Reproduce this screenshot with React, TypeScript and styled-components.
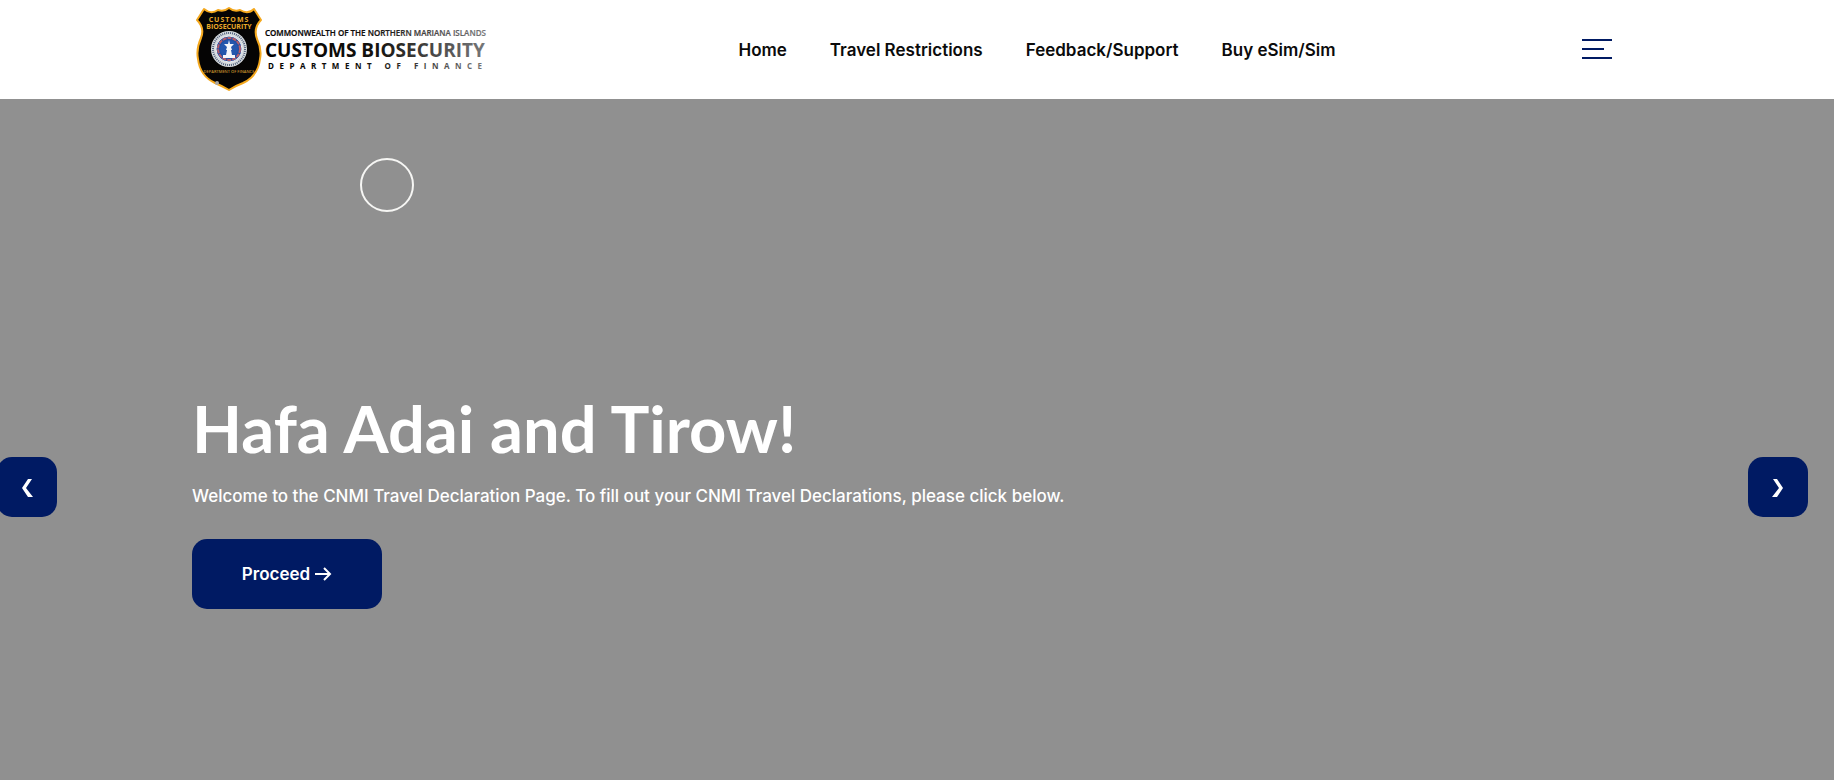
import React from 'react';
import styled, { createGlobalStyle } from 'styled-components';

const navy = '#001a63';

const GlobalStyle = createGlobalStyle`
  * { box-sizing: border-box; }
  body {
    margin: 0;
    background: #909090;
    font-family: Inter, "Liberation Sans", sans-serif;
    overflow-x: hidden;
  }
`;

const Page = styled.div`
  display: flex;
  flex-direction: column;
  min-height: 100vh;
`;

const Header = styled.header`
  background: #fff;
  padding: 0 30px 0 0;
`;

const Container = styled.div`
  width: 100%;
  max-width: 1420px;
  margin: 0 auto;
`;

const HeaderRow = styled(Container)`
  display: flex;
  align-items: center;
  justify-content: space-between;
`;

const LogoLink = styled.a`
  display: flex;
`;

const Nav = styled.nav`
  display: flex;
  gap: 43px;
`;

const NavLink = styled.a`
  color: #0b0b0b;
  font-size: 17px;
  line-height: 28px;
  font-weight: 600;
  text-decoration: none;
  white-space: nowrap;
`;

const MenuButton = styled.button`
  display: flex;
  flex-direction: column;
  gap: 7px;
  width: 30px;
  padding: 0 0 2px;
  border: 0;
  background: none;
`;

const MenuBar = styled.span<{ $short?: boolean }>`
  width: ${(p) => (p.$short ? '22px' : '30px')};
  height: 2px;
  background: ${navy};
`;

const Hero = styled.main`
  position: relative;
  flex: 1;
  display: flex;
  padding: 288px 30px 120px 0;
  background: #909090;
`;

const Ring = styled.span`
  position: absolute;
  top: 59px;
  left: 360px;
  width: 54px;
  height: 54px;
  border: 2px solid #f6f6f4;
  border-radius: 50%;
`;

const Title = styled.h1`
  margin: 0;
  color: #fff;
  font-family: Lato, "Liberation Sans", sans-serif;
  font-size: 65px;
  line-height: 82px;
  font-weight: 700;
`;

const Lead = styled.p`
  margin: 12px 0 28px;
  color: #fff;
  font-size: 17px;
  line-height: 30px;
  font-weight: 500;
`;

const Proceed = styled.a`
  display: inline-flex;
  align-items: center;
  justify-content: center;
  gap: 5px;
  width: 190px;
  height: 70px;
  border-radius: 15px;
  background: ${navy};
  color: #fff;
  font-size: 17px;
  font-weight: 600;
  text-decoration: none;
`;

const SlideButton = styled.button<{ $side: 'left' | 'right' }>`
  position: absolute;
  top: 358px;
  ${(p) => (p.$side === 'left' ? 'left: -3px;' : 'right: 26px;')}
  display: flex;
  align-items: center;
  justify-content: center;
  width: 60px;
  height: 60px;
  padding: 2px 0 0;
  border: 0;
  border-radius: 15px;
  background: ${navy};
`;

const links = ['Home', 'Travel Restrictions', 'Feedback/Support', 'Buy eSim/Sim'];

function Logo() {
  return (
    <svg width="300" height="99" viewBox="0 0 300 99" role="img" aria-label="Customs Biosecurity">
      <defs>
        <linearGradient id="fade" gradientUnits="userSpaceOnUse" x1="74" x2="294" y1="0" y2="0">
          <stop offset="0" stopColor="#000" />
          <stop offset="0.5" stopColor="#15130f" />
          <stop offset="1" stopColor="#77787a" />
        </linearGradient>
      </defs>
      <path
        d="M12 9Q19 15 26 10Q32 12 37 8Q42 12 48 10Q56 15 62 9L69 20Q61 28 65 39Q70 49 68 59Q66 76 51 83Q43 86 37 90Q30 86 23 83Q8 76 6 59Q4 49 9 38Q13 28 5 20Z"
        fill="#050404"
        stroke="#f4a81d"
        strokeWidth="2"
        strokeLinejoin="round"
      />
      <g fill="#e8a829" fontFamily="Open Sans, sans-serif" fontWeight="700" textAnchor="middle">
        <text x="37" y="22" fontSize="7" letterSpacing="1">CUSTOMS</text>
        <text x="37" y="29" fontSize="7">BIOSECURITY</text>
        <text x="37" y="73" fontSize="4" fontWeight="600" fill="#c8942d">DEPARTMENT OF FINANCE</text>
      </g>
      <circle cx="37" cy="49" r="18" fill="#d9dde0" />
      <circle cx="37" cy="49" r="16" fill="none" stroke="#52617c" strokeWidth="2" strokeDasharray="1 1" />
      <circle cx="37" cy="49" r="13" fill="#1f4fa3" stroke="#eef0f2" />
      <circle cx="37" cy="49" r="11" fill="none" stroke="#b65d69" strokeWidth="2" strokeDasharray="4 1" />
      <circle cx="37" cy="49" r="9" fill="#2457ad" />
      <path d="M37 40l1 4h4l-3 3 1 3h-1l1 5h3v3H31v-3h3l1-5h-1l1-3-3-3h4z" fill="#f4f6fa" />
      <circle cx="25" cy="83" r="2" fill="#a7a7a7" />
      <g fill="url(#fade)" fontFamily="Open Sans, sans-serif" fontWeight="700">
        <text x="73" y="36" fontSize="8" fontWeight="600" stroke="url(#fade)" strokeWidth="0.2">COMMONWEALTH OF THE NORTHERN MARIANA ISLANDS</text>
        <text x="73" y="57" fontSize="19">CUSTOMS BIOSECURITY</text>
        <text x="76" y="69" fontSize="8" letterSpacing="5.5">DEPARTMENT OF FINANCE</text>
      </g>
    </svg>
  );
}

function Chevron({ flip }: { flip?: boolean }) {
  return (
    <svg width="12" height="18" viewBox="0 0 12 18" aria-hidden="true">
      <path
        d={flip ? 'M1 0H5L11 9L5 18H0L7 9Z' : 'M11 0H7L1 9L7 18H12L5 9Z'}
        fill="#fff"
      />
    </svg>
  );
}

export default function App() {
  return (
    <Page>
      <GlobalStyle />
      <Header>
        <HeaderRow>
          <LogoLink href="#"><Logo /></LogoLink>
          <Nav>
            {links.map((label) => (
              <NavLink href="#" key={label}>{label}</NavLink>
            ))}
          </Nav>
          <MenuButton type="button" aria-label="Open menu">
            <MenuBar />
            <MenuBar $short />
            <MenuBar />
          </MenuButton>
        </HeaderRow>
      </Header>
      <Hero>
        <Ring />
        <Container>
          <Title>Hafa Adai and Tirow!</Title>
          <Lead>
            Welcome to the CNMI Travel Declaration Page. To fill out your CNMI Travel Declarations, please click below.
          </Lead>
          <Proceed href="#">
            Proceed
            <svg width="17" height="14" viewBox="0 0 17 14" fill="none" stroke="#fff" strokeWidth="2" aria-hidden="true">
              <path d="M0 7H15M9 1L15 7L9 13" />
            </svg>
          </Proceed>
        </Container>
        <SlideButton type="button" $side="left" aria-label="Previous slide"><Chevron /></SlideButton>
        <SlideButton type="button" $side="right" aria-label="Next slide"><Chevron flip /></SlideButton>
      </Hero>
    </Page>
  );
}
